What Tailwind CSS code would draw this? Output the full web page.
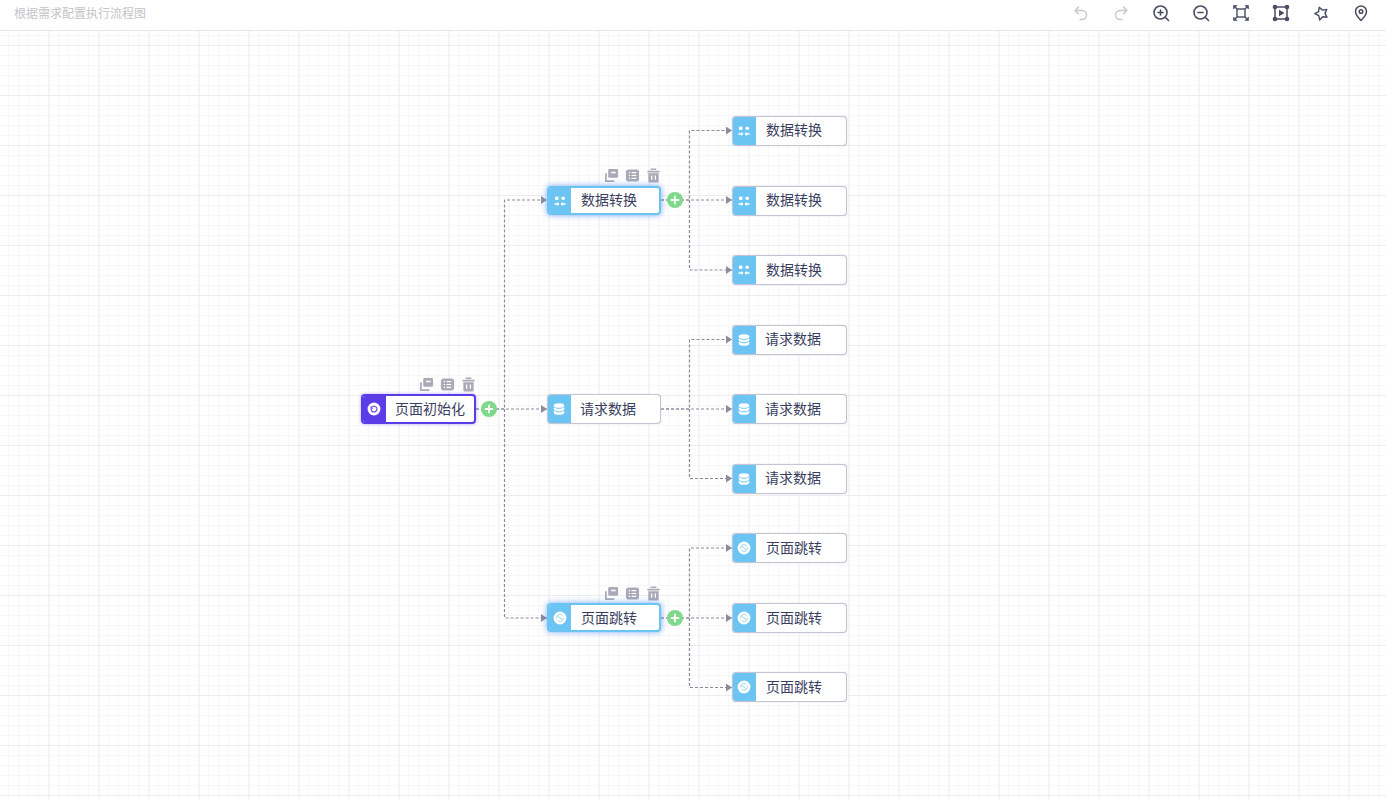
<!DOCTYPE html>
<html lang="zh-CN">
<head>
<meta charset="UTF-8">
<title>流程图</title>
<script src="https://cdn.jsdelivr.net/npm/@tailwindcss/browser@4"></script>
</head>
<body class="bg-white font-['Noto_Sans_CJK_SC','Noto_Sans',sans-serif] text-[#3a3e5e] overflow-hidden">

<!-- icon sheet -->
<svg class="hidden">
  <symbol id="i-transform" viewBox="0 0 14 14">
    <rect x="2" y="2.500" width="3.500" height="3.500" rx="1" fill="#fff"/>
    <circle cx="10.200" cy="4.200" r="1.800" fill="#fff"/>
    <path d="M1.500 10h4M8.500 10h4" stroke="#fff" stroke-width="1.400" fill="none"/>
    <path d="M6.500 10 4.200 8v4zM7.500 10l2.300-2v4z" fill="#fff"/>
  </symbol>
  <symbol id="i-db" viewBox="0 0 24 24">
    <ellipse cx="12" cy="6" rx="9" ry="4" fill="#fff"/>
    <path d="M3 8.500v3.500c0 2.200 4 4 9 4s9-1.800 9-4V8.500c-1.800 2-5.200 3-9 3s-7.200-1-9-3z" fill="#fff"/>
    <path d="M3 14.500V18c0 2.200 4 4 9 4s9-1.800 9-4v-3.500c-1.800 2-5.200 3-9 3s-7.200-1-9-3z" fill="#fff"/>
  </symbol>
  <symbol id="i-jump" viewBox="0 0 24 24">
    <circle cx="12" cy="12" r="11" fill="#fff"/>
    <path d="M6 12a6 6 0 0 1 9.500-5M18 12a6 6 0 0 1-9.500 5M9 9l6 6" stroke="#8fd2f4" stroke-width="1.500" fill="none" stroke-linecap="round"/>
  </symbol>
  <symbol id="i-init" viewBox="0 0 24 24">
    <circle cx="12" cy="12" r="11" fill="#fff"/>
    <path d="M9 8.200A5 5 0 1 1 7 12.500" stroke="#5b3de8" stroke-width="1.900" fill="none" stroke-linecap="round"/>
    <path d="M6.200 7v4.500h4.500z" fill="#5b3de8"/>
  </symbol>
  <symbol id="i-copy" viewBox="0 0 16 16">
    <path fill="#a9a9b8" d="M6 1h7.500A1.500 1.500 0 0 1 15 2.500V9a1.500 1.500 0 0 1-1.500 1.500H6A1.500 1.500 0 0 1 4.500 9V2.500A1.500 1.500 0 0 1 6 1zm1.500 3v1.500h5V4z"/>
    <path fill="none" stroke="#a9a9b8" stroke-width="1.800" d="M2 5.500V14h9"/>
  </symbol>
  <symbol id="i-list" viewBox="0 0 16 16">
    <rect x="1" y="1.500" width="14" height="13" rx="3" fill="#a9a9b8"/>
    <path d="M4 5h1.500M7 5h5M4 8h1.500M7 8h5M4 11h1.500M7 11h5" stroke="#fff" stroke-width="1.300"/>
  </symbol>
  <symbol id="i-trash" viewBox="0 0 16 16">
    <path fill="#a9a9b8" d="M5 0.500h6v1.500H5zM1.500 3h13v1.800h-13zM2.500 5.500h11V14a1.500 1.500 0 0 1-1.500 1.500H4A1.500 1.500 0 0 1 2.500 14z"/>
    <path d="M6 8v4.500M10 8v4.500" stroke="#fff" stroke-width="1.400"/>
  </symbol>
  <symbol id="i-plus" viewBox="0 0 16 16">
    <circle cx="8" cy="8" r="8" fill="#7fd98a"/>
    <path d="M8 3.800v8.400M3.800 8h8.400" stroke="#fff" stroke-width="1.800"/>
  </symbol>
</svg>

<!-- toolbar -->
<header class="h-[31px] border-b border-[#e6e6ee] flex items-center justify-between pl-[14px] pr-[16px] bg-white relative z-10">
  <span class="text-[12px] leading-[26px] pb-[5px] text-[#c4c4c8]">根据需求配置执行流程图</span>
  <div class="flex items-center gap-[22px] pb-[4px] text-[#4a4d63]">
    <svg class="w-[18px] h-[18px] text-[#c8c8cc]" viewBox="0 0 18 18" fill="none" stroke="currentColor" stroke-width="1.400" stroke-linecap="round" stroke-linejoin="round"><path d="M6.500 3 3 6.500 6.500 10M3 6.500h7a4.500 4.500 0 0 1 0 9H8"/></svg>
    <svg class="w-[18px] h-[18px] text-[#c8c8cc]" viewBox="0 0 18 18" fill="none" stroke="currentColor" stroke-width="1.400" stroke-linecap="round" stroke-linejoin="round"><path d="M11.500 3 15 6.500 11.500 10M15 6.500H8a4.500 4.500 0 0 0 0 9h2"/></svg>
    <svg class="w-[18px] h-[18px]" viewBox="0 0 18 18" fill="none" stroke="currentColor" stroke-width="1.600" stroke-linecap="round"><circle cx="8.500" cy="8.500" r="6.500"/><path d="M13.500 13.500 16.500 16.500M8.500 6v5M6 8.500h5"/></svg>
    <svg class="w-[18px] h-[18px]" viewBox="0 0 18 18" fill="none" stroke="currentColor" stroke-width="1.600" stroke-linecap="round"><circle cx="8.500" cy="8.500" r="6.500"/><path d="M13.500 13.500 16.500 16.500M6 8.500h5"/></svg>
    <svg class="w-[18px] h-[18px]" viewBox="0 0 18 18" fill="none" stroke="currentColor" stroke-width="1.400"><rect x="5" y="5" width="8" height="8"/><path d="M3 3 5 5M15 3 13 5M3 15 5 13M15 15 13 13"/><path d="M1.500 1.500h3.500L1.500 5zM16.500 1.500H13L16.500 5zM1.500 16.500H5L1.500 13zM16.500 16.500H13l3.500-3.500z" fill="currentColor" stroke="currentColor" stroke-width=".6"/></svg>
    <svg class="w-[18px] h-[18px]" viewBox="0 0 18 18" fill="none" stroke="currentColor" stroke-width="1.500"><rect x="3" y="3" width="12" height="12"/><circle cx="3" cy="3" r="2.300" fill="currentColor" stroke="none"/><circle cx="15" cy="3" r="2.300" fill="currentColor" stroke="none"/><circle cx="3" cy="15" r="2.300" fill="currentColor" stroke="none"/><circle cx="15" cy="15" r="2.300" fill="currentColor" stroke="none"/><path d="M7 5.800v6.400L12.500 9z" fill="currentColor" stroke="none"/></svg>
    <svg class="w-[15px] h-[15px] mx-[1.500px]" viewBox="0 0 18 18" fill="none" stroke="currentColor" stroke-width="1.700" stroke-linejoin="round"><path d="M6.260 1.480 10.160 4.960 15.300 4.070 13.200 8.850 15.630 13.470 10.440 12.950 6.800 16.690 5.690 11.590 1 9.280 5.520 6.650z"/></svg>
    <svg class="w-[18px] h-[18px]" viewBox="0 0 18 18" fill="none" stroke="currentColor" stroke-width="1.500"><path d="M9 16.500C6 13.500 3.500 10.800 3.500 7.500a5.500 5.500 0 0 1 11 0c0 3.300-2.500 6-5.500 9z" stroke-linejoin="round"/><circle cx="9" cy="7.500" r="1.800"/></svg>
  </div>
</header>

<!-- canvas -->
<main class="absolute left-0 top-[31px] w-[1386px] h-[768px] overflow-hidden">
  <svg class="absolute inset-0" width="1386" height="768" fill="none">
    <defs>
      <pattern id="minor" x="8" y="4" width="10" height="10" patternUnits="userSpaceOnUse">
        <path d="M.5 0V10M0 .5H10" stroke="#f7f7f9"/>
      </pattern>
      <pattern id="major" x="48" y="14" width="50" height="50" patternUnits="userSpaceOnUse">
        <path d="M1 0V50" stroke="#f5f5f7" stroke-width="2"/>
        <path d="M0 .5H50" stroke="#ededf0"/>
      </pattern>
      <marker id="arrow" viewBox="0 0 6 8" markerWidth="6" markerHeight="8" refX="6" refY="4" orient="auto" markerUnits="userSpaceOnUse">
        <path d="M0 0 6 4 0 8z" fill="#8b8b9e"/>
      </marker>
    </defs>
    <rect width="1386" height="768" fill="url(#minor)"/>
    <rect width="1386" height="768" fill="url(#major)"/>
    <!-- edges, y is page y minus 31 -->
    <g stroke="#8b8b9e" stroke-width="1.200" stroke-dasharray="3 2">
      <path marker-end="url(#arrow)" d="M476 378H504.500V169H547"/>
      <path marker-end="url(#arrow)" d="M476 378H547"/>
      <path marker-end="url(#arrow)" d="M504.500 378V587H547"/>
      <path marker-end="url(#arrow)" d="M661 169H689.500V99.500H732"/>
      <path marker-end="url(#arrow)" d="M661 169H732"/>
      <path marker-end="url(#arrow)" d="M689.500 169V239H732"/>
      <path marker-end="url(#arrow)" d="M661 378H689.500V308.500H732"/>
      <path marker-end="url(#arrow)" d="M661 378H732"/>
      <path marker-end="url(#arrow)" d="M689.500 378V447.500H732"/>
      <path marker-end="url(#arrow)" d="M661 587H689.500V517H732"/>
      <path marker-end="url(#arrow)" d="M661 587H732"/>
      <path marker-end="url(#arrow)" d="M689.500 587V656.500H732"/>
    </g>
  </svg>

  <!-- root node -->
  <div class="absolute left-[419px] top-[346px] flex gap-[6px]">
    <svg class="w-[15px] h-[15px]"><use href="#i-copy"/></svg><svg class="w-[15px] h-[15px]"><use href="#i-list"/></svg><svg class="w-[15px] h-[15px]"><use href="#i-trash"/></svg>
  </div>
  <div class="absolute left-[361px] top-[363px] w-[115px] h-[30px] flex rounded-[4px] border-2 border-[#5b3de8] bg-white overflow-hidden shadow-[0_0_3px_#5b3de880]">
    <div class="w-[23px] pr-[2px] bg-[#5b3de8] flex items-center justify-center"><svg class="w-[14px] h-[14px]"><use href="#i-init"/></svg></div>
    <span class="pl-[9px] text-[14px] leading-[24px]">页面初始化</span>
  </div>
  <svg class="absolute left-[481px] top-[370px] w-[16px] h-[16px]"><use href="#i-plus"/></svg>

  <!-- middle nodes -->
  <div class="absolute left-[604px] top-[137px] flex gap-[6px]">
    <svg class="w-[15px] h-[15px]"><use href="#i-copy"/></svg><svg class="w-[15px] h-[15px]"><use href="#i-list"/></svg><svg class="w-[15px] h-[15px]"><use href="#i-trash"/></svg>
  </div>
  <div class="absolute left-[547px] top-[155px] w-[114px] h-[29px] flex rounded-[4px] border-2 border-[#6cc4f2] bg-white overflow-hidden shadow-[0_0_6px_#4f8ff0c0]">
    <div class="w-[22px] bg-[#6cc4f2] flex items-center justify-center"><svg class="w-[14px] h-[14px]"><use href="#i-transform"/></svg></div>
    <span class="pl-[10px] text-[14px] leading-[23px]">数据转换</span>
  </div>
  <svg class="absolute left-[667px] top-[161px] w-[16px] h-[16px]"><use href="#i-plus"/></svg>

  <div class="absolute left-[547px] top-[363px] w-[114px] h-[30px] flex rounded-[4px] border border-[#c4c4d4] shadow-[0_0_1px_#b8b8cc] bg-white overflow-hidden">
    <div class="w-[23px] pr-[1px] bg-[#6cc4f2] flex items-center justify-center"><svg class="w-[14px] h-[14px]"><use href="#i-db"/></svg></div>
    <span class="pl-[9px] text-[14px] leading-[26px]">请求数据</span>
  </div>

  <div class="absolute left-[604px] top-[555px] flex gap-[6px]">
    <svg class="w-[15px] h-[15px]"><use href="#i-copy"/></svg><svg class="w-[15px] h-[15px]"><use href="#i-list"/></svg><svg class="w-[15px] h-[15px]"><use href="#i-trash"/></svg>
  </div>
  <div class="absolute left-[547px] top-[572px] w-[114px] h-[29px] flex rounded-[4px] border-2 border-[#6cc4f2] bg-white overflow-hidden shadow-[0_0_6px_#4f8ff0c0]">
    <div class="w-[22px] bg-[#6cc4f2] flex items-center justify-center"><svg class="w-[14px] h-[14px]"><use href="#i-jump"/></svg></div>
    <span class="pl-[10px] text-[14px] leading-[25px]">页面跳转</span>
  </div>
  <svg class="absolute left-[667px] top-[579px] w-[16px] h-[16px]"><use href="#i-plus"/></svg>

  <!-- leaf nodes -->
  <div class="absolute left-[732px] top-[85px] w-[115px] h-[30px] flex rounded-[4px] border border-[#c4c4d4] shadow-[0_0_1px_#b8b8cc] bg-white overflow-hidden"><div class="w-[23px] pr-[1px] bg-[#6cc4f2] flex items-center justify-center"><svg class="w-[14px] h-[14px]"><use href="#i-transform"/></svg></div><span class="pl-[10px] text-[14px] leading-[25px]">数据转换</span></div>
  <div class="absolute left-[732px] top-[155px] w-[115px] h-[30px] flex rounded-[4px] border border-[#c4c4d4] shadow-[0_0_1px_#b8b8cc] bg-white overflow-hidden"><div class="w-[23px] pr-[1px] bg-[#6cc4f2] flex items-center justify-center"><svg class="w-[14px] h-[14px]"><use href="#i-transform"/></svg></div><span class="pl-[10px] text-[14px] leading-[25px]">数据转换</span></div>
  <div class="absolute left-[732px] top-[224px] w-[115px] h-[30px] flex rounded-[4px] border border-[#c4c4d4] shadow-[0_0_1px_#b8b8cc] bg-white overflow-hidden"><div class="w-[23px] pr-[1px] bg-[#6cc4f2] flex items-center justify-center"><svg class="w-[14px] h-[14px]"><use href="#i-transform"/></svg></div><span class="pl-[10px] text-[14px] leading-[27px]">数据转换</span></div>
  <div class="absolute left-[732px] top-[294px] w-[115px] h-[30px] flex rounded-[4px] border border-[#c4c4d4] shadow-[0_0_1px_#b8b8cc] bg-white overflow-hidden"><div class="w-[23px] pr-[1px] bg-[#6cc4f2] flex items-center justify-center"><svg class="w-[14px] h-[14px]"><use href="#i-db"/></svg></div><span class="pl-[9px] text-[14px] leading-[25px]">请求数据</span></div>
  <div class="absolute left-[732px] top-[363px] w-[115px] h-[30px] flex rounded-[4px] border border-[#c4c4d4] shadow-[0_0_1px_#b8b8cc] bg-white overflow-hidden"><div class="w-[23px] pr-[1px] bg-[#6cc4f2] flex items-center justify-center"><svg class="w-[14px] h-[14px]"><use href="#i-db"/></svg></div><span class="pl-[9px] text-[14px] leading-[26px]">请求数据</span></div>
  <div class="absolute left-[732px] top-[433px] w-[115px] h-[30px] flex rounded-[4px] border border-[#c4c4d4] shadow-[0_0_1px_#b8b8cc] bg-white overflow-hidden"><div class="w-[23px] pr-[1px] bg-[#6cc4f2] flex items-center justify-center"><svg class="w-[14px] h-[14px]"><use href="#i-db"/></svg></div><span class="pl-[9px] text-[14px] leading-[25px]">请求数据</span></div>
  <div class="absolute left-[732px] top-[502px] w-[115px] h-[30px] flex rounded-[4px] border border-[#c4c4d4] shadow-[0_0_1px_#b8b8cc] bg-white overflow-hidden"><div class="w-[23px] pr-[1px] bg-[#6cc4f2] flex items-center justify-center"><svg class="w-[14px] h-[14px]"><use href="#i-jump"/></svg></div><span class="pl-[10px] text-[14px] leading-[26px]">页面跳转</span></div>
  <div class="absolute left-[732px] top-[572px] w-[115px] h-[30px] flex rounded-[4px] border border-[#c4c4d4] shadow-[0_0_1px_#b8b8cc] bg-white overflow-hidden"><div class="w-[23px] pr-[1px] bg-[#6cc4f2] flex items-center justify-center"><svg class="w-[14px] h-[14px]"><use href="#i-jump"/></svg></div><span class="pl-[10px] text-[14px] leading-[26px]">页面跳转</span></div>
  <div class="absolute left-[732px] top-[641px] w-[115px] h-[30px] flex rounded-[4px] border border-[#c4c4d4] shadow-[0_0_1px_#b8b8cc] bg-white overflow-hidden"><div class="w-[23px] pr-[1px] bg-[#6cc4f2] flex items-center justify-center"><svg class="w-[14px] h-[14px]"><use href="#i-jump"/></svg></div><span class="pl-[10px] text-[14px] leading-[27px]">页面跳转</span></div>
</main>
</body>
</html>
